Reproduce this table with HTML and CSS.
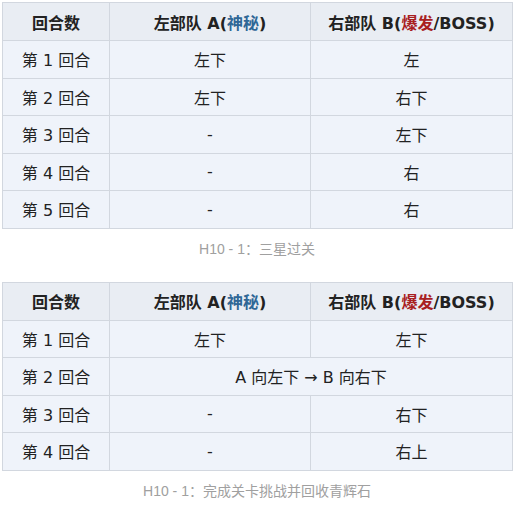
FILE: index.html
```html
<!DOCTYPE html>
<html lang="zh">
<head>
<meta charset="utf-8">
<link rel="stylesheet" href="styles.css">
</head>
<body>
<div class="page">
  <table class="wt">
    <colgroup><col class="c1"><col class="c2"><col class="c3"></colgroup>
    <thead>
      <tr><th>回合数</th><th>左部队 A(<span class="blue">神秘</span>)</th><th>右部队 B(<span class="red">爆发</span>/BOSS)</th></tr>
    </thead>
    <tbody>
      <tr><td>第 1 回合</td><td>左下</td><td>左</td></tr>
      <tr><td>第 2 回合</td><td>左下</td><td>右下</td></tr>
      <tr><td>第 3 回合</td><td>-</td><td>左下</td></tr>
      <tr><td>第 4 回合</td><td>-</td><td>右</td></tr>
      <tr><td>第 5 回合</td><td>-</td><td>右</td></tr>
    </tbody>
  </table>
  <p class="caption">H10 - 1：三星过关</p>
  <table class="wt">
    <colgroup><col class="c1"><col class="c2"><col class="c3"></colgroup>
    <thead>
      <tr><th>回合数</th><th>左部队 A(<span class="blue">神秘</span>)</th><th>右部队 B(<span class="red">爆发</span>/BOSS)</th></tr>
    </thead>
    <tbody>
      <tr><td>第 1 回合</td><td>左下</td><td>左下</td></tr>
      <tr><td>第 2 回合</td><td colspan="2">A 向左下 → B 向右下</td></tr>
      <tr><td>第 3 回合</td><td>-</td><td>右下</td></tr>
      <tr><td>第 4 回合</td><td>-</td><td>右上</td></tr>
    </tbody>
  </table>
  <p class="caption">H10 - 1：完成关卡挑战并回收青辉石</p>
</div>
</body>
</html>
```
FILE: styles.css
```css
html, body { margin: 0; padding: 0; background: #fff; }
body {
  font-family: "DejaVu Sans", "Noto Sans CJK SC", sans-serif;
  color: #222;
}
.page { padding: 2px 2px 0 2px; }
.wt {
  width: 510px;
  border-collapse: collapse;
  table-layout: fixed;
  font-size: 16px;
  border: 1px solid #d2d7df;
}
.c1 { width: 107px; }
.c2 { width: 201px; }
.c3 { width: 202px; }
.wt th {
  background: #e9edf3;
  height: 37px;
  font-weight: bold;
  border: 1px solid #d2d7df;
  padding: 0;
  text-align: center;
}
.wt td {
  background: #eff3fa;
  height: 36.5px;
  border: 1px solid #d2d7df;
  padding: 0;
  text-align: center;
  font-weight: normal;
}
.blue { color: #2f6796; }
.red { color: #a8201f; }
.caption {
  margin: 0;
  height: 53px;
  line-height: 40px;
  text-align: center;
  font-family: "Liberation Sans", "Noto Sans CJK SC", sans-serif;
  font-size: 14px;
  color: #a0a0a0;
}
```
